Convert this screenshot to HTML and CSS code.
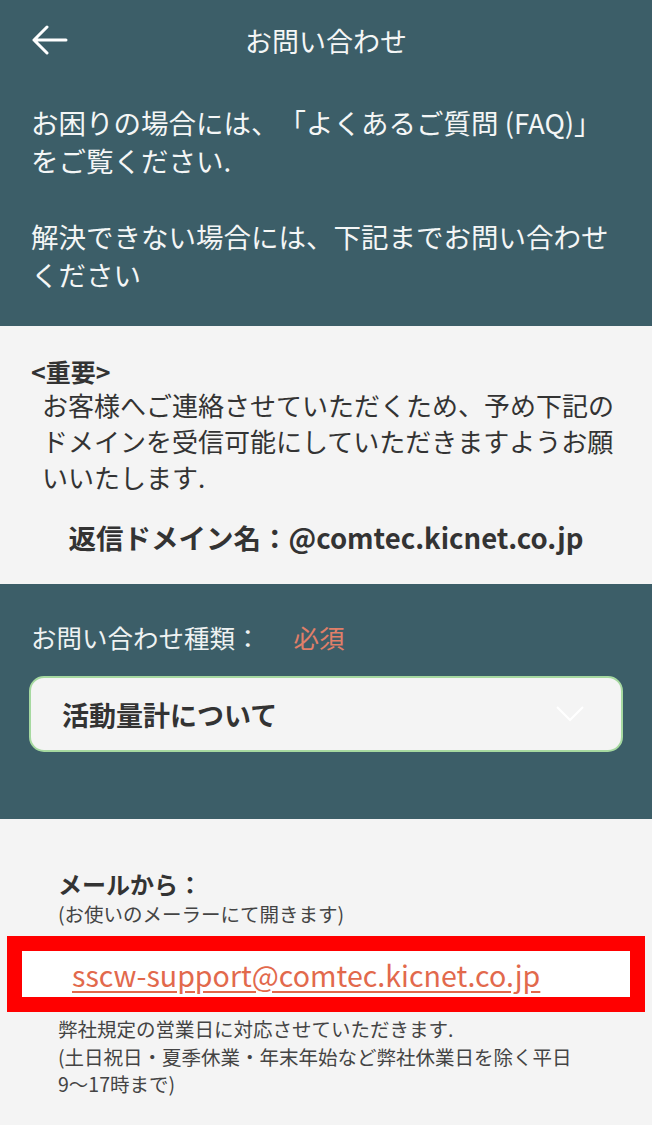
FILE: index.html
```html
<!DOCTYPE html>
<html lang="ja">
<head>
    <meta charset="UTF-8">
    <meta name="viewport" content="width=device-width, initial-scale=1.0">
    <title>お問い合わせ</title>
    <link rel="stylesheet" href="styles.css">
</head>
<body>
    <div class="intro">
        <div class="topbar">
            <svg class="back" width="36" height="30" viewBox="0 0 36 30">
                <path d="M2 15 H34 M15 2 L2 15 L15 28" fill="none" stroke="#fff" stroke-width="3" stroke-linecap="round" stroke-linejoin="round"/>
            </svg>
            <h1>お問い合わせ</h1>
        </div>
        <p>お困りの場合には、「よくあるご質問 (FAQ)」<br>をご覧ください.</p>
        <p class="gap">解決できない場合には、下記までお問い合わせください</p>
    </div>

    <div class="notice">
        <h3>&lt;重要&gt;</h3>
        <p>お客様へご連絡させていただくため、予め下記のドメインを受信可能にしていただきますようお願いいたします.</p>
        <div class="domain">返信ドメイン名：@comtec.kicnet.co.jp</div>
    </div>

    <div class="kind">
        <div class="label">お問い合わせ種類：<span class="required">必須</span></div>
        <div class="select">
            <span>活動量計について</span>
            <svg width="28" height="16" viewBox="0 0 28 16">
                <path d="M1 1 L14 14 L27 1" fill="none" stroke="#fff" stroke-width="2"/>
            </svg>
        </div>
    </div>

    <div class="mail">
        <div class="mail-head">
            <h3>メールから：</h3>
            <div class="small">(お使いのメーラーにて開きます)</div>
        </div>
        <div class="mail-box">
            <a href="#">sscw-support@comtec.kicnet.co.jp</a>
        </div>
        <div class="small note">弊社規定の営業日に対応させていただきます.<br>(土日祝日・夏季休業・年末年始など弊社休業日を除く平日<br>9～17時まで)</div>
    </div>
</body>
</html>
```

FILE: styles.css
```css
body {
    font-family: "Noto Sans CJK JP", "Noto Sans", sans-serif;
    margin: 0;
    padding: 0;
    background-color: #f4f4f4;
    color: #333;
    text-spacing-trim: space-all;
}
.intro {
    background-color: #3c5e68;
    color: #f4f6f6;
    padding: 0 31px 33px;
}
.topbar {
    height: 80px;
    display: flex;
    align-items: center;
    justify-content: center;
    position: relative;
    margin-bottom: 23px;
}
.back {
    position: absolute;
    left: 1px;
    top: 25px;
}
h1 {
    margin: 0;
    font-size: 27px;
    font-weight: 400;
}
.intro p {
    margin: 0;
    font-size: 27.5px;
    line-height: 38px;
}
.intro .gap {
    margin-top: 38px;
}
.notice {
    padding: 29px 20px 29px 31px;
}
h3 {
    margin: 0;
    font-size: 25px;
    line-height: 32px;
    font-weight: 700;
}
.notice p {
    margin: 0 0 24px 11px;
    font-size: 26px;
    line-height: 36px;
}
.domain {
    text-align: center;
    margin-right: -20px;
    margin-left: -31px;
    font-size: 27.5px;
    line-height: 36px;
    font-weight: 700;
}
.kind {
    background-color: #3c5e68;
    padding: 35px 29px 67px;
}
.label {
    color: #eef2f2;
    font-size: 25.5px;
    line-height: 36px;
    padding-left: 2px;
    margin-bottom: 21px;
}
.required {
    color: #e17f68;
    margin-left: 33px;
}
.select {
    height: 72px;
    background: #f4f4f4;
    border: 2px solid #a6d9a0;
    border-radius: 15px;
    display: flex;
    align-items: center;
    justify-content: space-between;
    padding: 0 37px 0 31px;
}
.select span {
    font-size: 27px;
    font-weight: 700;
    color: #333;
}
.mail {
    padding: 48px 0 30px;
}
.mail-head {
    padding-left: 58px;
}
.mail h3 {
    font-size: 24px;
    line-height: 34px;
}
.small {
    font-size: 19.5px;
    line-height: 26px;
    color: #444;
}
.mail-box {
    margin: 9px 7px 3px;
    border: 15px solid #ff0000;
    background: #fff;
    height: 46px;
    display: flex;
    align-items: center;
    padding-left: 50px;
}
.mail-box a {
    color: #e2694c;
    font-size: 28.6px;
    text-underline-offset: 4px;
}
.note {
    padding-left: 58px;
    line-height: 27.5px;
}
```
